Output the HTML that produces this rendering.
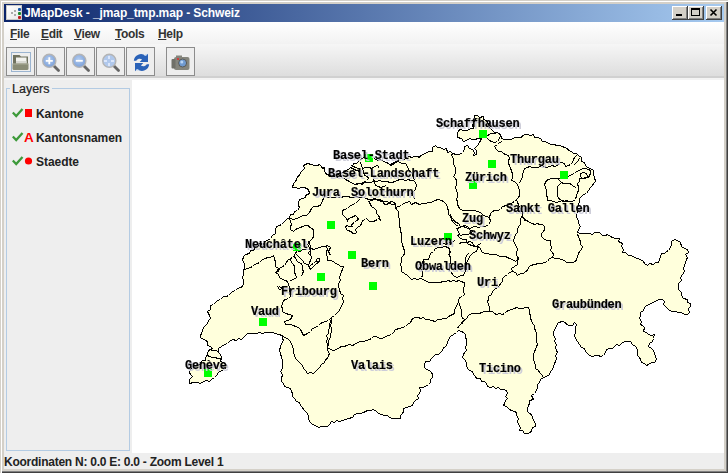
<!DOCTYPE html>
<html><head><meta charset="utf-8">
<style>
*{margin:0;padding:0;box-sizing:border-box}
html,body{width:728px;height:473px;overflow:hidden;background:#d4d0c8;font-family:"Liberation Sans",sans-serif}
.abs{position:absolute}
#frame{position:absolute;left:0;top:0;width:728px;height:473px;background:#d4d0c8;
 box-shadow: inset 1px 1px 0 #d4d0c8, inset 2px 2px 0 #fff, inset -1px -1px 0 #404040, inset -2px -2px 0 #808080}
#title{left:4px;top:4px;width:720px;height:18px;background:linear-gradient(to right,#0a246a 0%,#a6caf0 100%)}
#title .t{position:absolute;left:20px;top:2px;color:#fff;font-weight:bold;font-size:12px;white-space:nowrap;letter-spacing:-0.1px}
.wbtn{position:absolute;top:2px;width:16px;height:14px;background:#d4d0c8;
 box-shadow: inset -1px -1px 0 #404040, inset 1px 1px 0 #fff, inset -2px -2px 0 #808080}
#menubar{left:4px;top:22px;width:720px;height:22px;background:linear-gradient(#ffffff,#f2f2f2)}
.menu{position:absolute;top:5px;font-size:12px;line-height:14px;font-weight:bold;color:#333;white-space:nowrap;letter-spacing:-0.35px}
.menu u{text-decoration:underline;text-underline-offset:1px;text-decoration-thickness:1px}
#toolbar{left:4px;top:44px;width:720px;height:36px;background:linear-gradient(#f6f6f6,#dcdcdc);border-bottom:2px solid #f4f4f4;box-shadow:inset 0 -3px 0 -1px #d0d0d0}
.tb{position:absolute;top:3px;width:29px;height:29px;border:1px solid #8c8c8c;background:#eeeeee}
#left{left:4px;top:80px;width:128px;height:373px;background:#eeeeee}
#map{left:132px;top:80px;width:592px;height:373px;background:#fff;overflow:hidden}
#status{left:4px;top:453px;width:720px;height:16px;background:#eeeeee}
.lb{position:absolute;font-family:"Liberation Mono",monospace;font-weight:bold;font-size:12px;line-height:12px;letter-spacing:-0.25px;color:#000;white-space:nowrap;text-shadow:2px 2px 0 #cdcdd9;will-change:transform;-webkit-text-stroke:0.15px #000}
.li{position:absolute;left:32px;font-size:12px;font-weight:bold;color:#222;white-space:nowrap;line-height:14px;letter-spacing:-0.05px}
</style></head><body>
<div id="frame"></div>
<svg width="0" height="0" style="position:absolute"><defs><radialGradient id="mg" cx="0.45" cy="0.4" r="0.6"><stop offset="0" stop-color="#b4cdf0"/><stop offset="1" stop-color="#7a9fd8"/></radialGradient></defs></svg>
<div id="title" class="abs">
 <div class="abs" style="left:2px;top:1px;width:16px;height:15px;background:linear-gradient(135deg,#fff,#e8e8e8);border:1px solid #c8c8c8">
  <div class="abs" style="left:11px;top:2px;width:3px;height:3px;border-radius:1px;background:#1a5aa8"></div>
  <div class="abs" style="left:11px;top:6px;width:3px;height:3px;border-radius:1px;background:#1a8a28"></div>
  <div class="abs" style="left:11px;top:10px;width:3px;height:3px;border-radius:1px;background:#c02020"></div>
  <div class="abs" style="left:7px;top:4px;width:2px;height:2px;background:#aaa"></div>
  <div class="abs" style="left:4px;top:6px;width:2px;height:2px;background:#aaa"></div>
  <div class="abs" style="left:7px;top:8px;width:2px;height:2px;background:#aaa"></div>
 </div>
 <div class="t">JMapDesk - _jmap_tmp.map - Schweiz</div>
 <div class="wbtn" style="left:668px"><div class="abs" style="left:4px;top:8px;width:6px;height:2px;background:#000"></div></div>
 <div class="wbtn" style="left:684px"><div class="abs" style="left:3px;top:2px;width:9px;height:8px;border:1px solid #000;border-top-width:2px"></div></div>
 <div class="wbtn" style="left:702px"><svg class="abs" style="left:0;top:0" width="16" height="14"><path d="M4.5 3.5 L10.5 9.5 M10.5 3.5 L4.5 9.5" stroke="#000" stroke-width="1.6"/></svg></div>
</div>
<div id="menubar" class="abs">
 <div class="menu" style="left:6px"><u>F</u>ile</div>
 <div class="menu" style="left:37px"><u>E</u>dit</div>
 <div class="menu" style="left:70px"><u>V</u>iew</div>
 <div class="menu" style="left:111px"><u>T</u>ools</div>
 <div class="menu" style="left:154px"><u>H</u>elp</div>
</div>
<div id="toolbar" class="abs">
 <div class="tb" style="left:2px">
  <div class="abs" style="left:4px;top:4px;width:20px;height:20px;border:1px solid #9bb4d0"></div>
  <svg class="abs" style="left:0;top:0" width="29" height="29">
   <path d="M6 7 h6.5 l1.5 1.5 h7 v9 h-15z" fill="#70725f"/>
   <rect x="9" y="9.5" width="10.5" height="6.5" fill="#f2f2ee"/>
   <rect x="9" y="13" width="10.5" height="3" fill="#d8d8d2"/>
   <path d="M5.5 15.5 h16 v5 q0 1.5 -1.5 1.5 h-13 q-1.5 0 -1.5 -1.5z" fill="#8a8c76"/>
   <path d="M6 16 h15" stroke="#a8aa96" stroke-width="1"/>
  </svg>
 </div>
 <div class="tb" style="left:32px">
  <svg class="abs" style="left:0;top:0" width="29" height="29">
   <path d="M17 18 l4.5 4.5" stroke="#666" stroke-width="2.8" stroke-linecap="round"/>
   <circle cx="12.3" cy="12.8" r="6.6" fill="url(#mg)" stroke="#b4b4b4" stroke-width="1.4"/>
   <path d="M12.3 9.3 v7 M8.8 12.8 h7" stroke="#fff" stroke-width="1.8"/>
  </svg>
 </div>
 <div class="tb" style="left:62px">
  <svg class="abs" style="left:0;top:0" width="29" height="29">
   <path d="M17 18 l4.5 4.5" stroke="#666" stroke-width="2.8" stroke-linecap="round"/>
   <circle cx="12.3" cy="12.8" r="6.6" fill="url(#mg)" stroke="#b4b4b4" stroke-width="1.4"/>
   <path d="M8.8 12.8 h7" stroke="#fff" stroke-width="1.8"/>
  </svg>
 </div>
 <div class="tb" style="left:92px">
  <svg class="abs" style="left:0;top:0" width="29" height="29">
   <path d="M17 18 l4.5 4.5" stroke="#666" stroke-width="2.8" stroke-linecap="round"/>
   <circle cx="12.3" cy="12.8" r="6.6" fill="#b0c8ec" stroke="#b4b4b4" stroke-width="1.4"/>
   <path d="M12 8 v3 M12 15 v3 M7 13 h3 M14 13 h3" stroke="#e8f0ff" stroke-width="1.5"/>
  </svg>
 </div>
 <div class="tb" style="left:122px">
  <svg class="abs" style="left:0;top:0" width="29" height="29">
   <g transform="translate(14.5 14.5) scale(1.18) translate(-14.5 -14.5)">
   <path d="M8 13 a6 6 0 0 1 10 -4 l2 -2 v7 h-7 l2 -2 a3.5 3.5 0 0 0 -5 1z" fill="#2a62b8"/>
   <path d="M21 16 a6 6 0 0 1 -10 4 l-2 2 v-7 h7 l-2 2 a3.5 3.5 0 0 0 5 -1z" fill="#2a62b8"/>
   <path d="M17 8.5 l2 -0.5 M10 20.5 l2 0.5" stroke="#9cc0f0" stroke-width="0.8"/>
   </g>
  </svg>
 </div>
 <div class="tb" style="left:162px">
  <svg class="abs" style="left:0;top:0" width="29" height="29">
   <rect x="7" y="9" width="15.5" height="13" rx="2" fill="#85857c"/>
   <rect x="4.5" y="11" width="4" height="9.5" rx="1" fill="#707068"/>
   <rect x="9" y="7.5" width="6" height="2.5" fill="#85857c"/>
   <circle cx="15.6" cy="15" r="4" fill="#6f9ad0" stroke="#5a5a55" stroke-width="1"/>
   <circle cx="14.8" cy="14" r="1.5" fill="#b8d4f4"/>
   <circle cx="11" cy="11" r="1.1" fill="#e03030"/>
  </svg>
 </div>
</div>
<div id="left" class="abs">
 <div class="abs" style="left:2px;top:8px;width:124px;height:363px;border:1px solid #b3cbe3"></div>
 <div class="abs" style="left:6px;top:2px;padding:0 2px;background:#eeeeee;font-size:12.5px;line-height:14px;color:#222;-webkit-text-stroke:0.2px #222">Layers</div>
 <svg class="abs" style="left:8px;top:26px" width="24" height="62">
  <path d="M0.8 6.5 L4.2 10 L10.5 3" stroke="#3d9a3a" stroke-width="2.3" fill="none"/>
  <rect x="13" y="3" width="7" height="8" fill="#ff0000"/>
  <path d="M0.8 30.5 L4.2 34 L10.5 27" stroke="#3d9a3a" stroke-width="2.3" fill="none"/>
  <path d="M0.8 54.5 L4.2 58 L10.5 51" stroke="#3d9a3a" stroke-width="2.3" fill="none"/>
  <circle cx="16.5" cy="55" r="3.6" fill="#ff0000"/>
 </svg>
 <div class="abs" style="left:20px;top:50px;font-size:13.5px;line-height:16px;color:#ff0000;font-weight:bold;font-family:'Liberation Sans',sans-serif">A</div>
 <div class="li" style="top:27px">Kantone</div>
 <div class="li" style="top:51px">Kantonsnamen</div>
 <div class="li" style="top:75px">Staedte</div>
</div>
<div id="map" class="abs"></div>
<div id="status" class="abs">
 <div class="abs" style="left:0px;top:2px;font-size:12px;font-weight:bold;color:#222;line-height:14px;white-space:nowrap;letter-spacing:-0.25px">Koordinaten N: 0.0 E: 0.0 - Zoom Level 1</div>
</div>
<svg class="abs" style="left:0;top:0" width="728" height="473" viewBox="0 0 728 473" shape-rendering="crispEdges">
<polygon points="303.5,165.5 304.5,168.5 302.5,170.5 300.5,172.5 299.5,175.5 297.5,176.5 296.5,179.5 295.5,181.5 293.5,183.5 292.5,187.5 295.5,187.5 298.5,188.5 301.5,187.5 304.5,187.5 308.5,189.5 309.5,193.5 305.5,195.5 305.5,197.5 302.5,198.5 299.5,199.5 298.5,202.5 298.5,205.5 299.5,207.5 297.5,210.5 294.5,211.5 293.5,214.5 290.5,214.5 289.5,217.5 286.5,219.5 283.5,222.5 281.5,224.5 279.5,225.5 276.5,226.5 275.5,229.5 275.5,233.5 272.5,235.5 270.5,238.5 267.5,240.5 264.5,241.5 263.5,244.5 259.5,243.5 258.5,246.5 255.5,246.5 253.5,250.5 250.5,250.5 249.5,253.5 245.5,254.5 243.5,256.5 242.5,260.5 244.5,263.5 244.5,267.5 243.5,270.5 243.5,274.5 242.5,277.5 243.5,280.5 243.5,283.5 242.5,286.5 240.5,287.5 237.5,288.5 235.5,290.5 232.5,291.5 230.5,293.5 228.5,295.5 226.5,296.5 223.5,296.5 220.5,299.5 217.5,300.5 215.5,302.5 213.5,304.5 210.5,305.5 210.5,309.5 207.5,311.5 209.5,315.5 210.5,318.5 208.5,320.5 207.5,323.5 205.5,325.5 203.5,327.5 202.5,330.5 201.5,333.5 200.5,335.5 200.5,337.5 203.5,339.5 206.5,340.5 207.5,342.5 207.5,345.5 210.5,346.5 212.5,348.5 208.5,350.5 207.5,354.5 205.5,357.5 205.5,360.5 202.5,360.5 199.5,364.5 196.5,364.5 194.5,366.5 192.5,367.5 190.5,369.5 189.5,372.5 190.5,374.5 192.5,376.5 189.5,379.5 189.5,383.5 193.5,382.5 197.5,382.5 200.5,383.5 203.5,381.5 206.5,380.5 209.5,381.5 211.5,379.5 214.5,377.5 216.5,375.5 218.5,372.5 221.5,370.5 224.5,369.5 227.5,366.5 225.5,364.5 223.5,362.5 220.5,361.5 221.5,357.5 220.5,354.5 218.5,352.5 218.5,348.5 221.5,346.5 224.5,344.5 227.5,343.5 229.5,341.5 232.5,339.5 236.5,340.5 238.5,338.5 241.5,339.5 243.5,337.5 245.5,335.5 247.5,333.5 250.5,333.5 253.5,333.5 256.5,333.5 259.5,332.5 262.5,333.5 265.5,332.5 268.5,332.5 272.5,332.5 275.5,333.5 278.5,334.5 282.5,335.5 282.5,338.5 283.5,340.5 281.5,343.5 280.5,346.5 279.5,350.5 280.5,353.5 281.5,357.5 282.5,360.5 282.5,364.5 282.5,368.5 280.5,371.5 282.5,374.5 281.5,378.5 281.5,381.5 283.5,383.5 284.5,386.5 287.5,387.5 290.5,388.5 291.5,391.5 292.5,393.5 292.5,396.5 294.5,398.5 296.5,401.5 299.5,402.5 300.5,405.5 302.5,407.5 303.5,409.5 305.5,411.5 307.5,413.5 308.5,416.5 308.5,419.5 310.5,422.5 312.5,424.5 315.5,425.5 318.5,427.5 321.5,426.5 324.5,426.5 327.5,426.5 329.5,424.5 331.5,421.5 334.5,422.5 336.5,420.5 339.5,421.5 342.5,420.5 345.5,419.5 348.5,418.5 352.5,417.5 354.5,414.5 357.5,413.5 360.5,413.5 363.5,412.5 367.5,410.5 370.5,410.5 373.5,409.5 376.5,411.5 378.5,413.5 381.5,414.5 384.5,415.5 387.5,415.5 389.5,417.5 392.5,418.5 395.5,418.5 397.5,418.5 400.5,418.5 400.5,415.5 402.5,413.5 403.5,411.5 403.5,408.5 406.5,407.5 409.5,406.5 412.5,405.5 413.5,402.5 415.5,400.5 418.5,398.5 417.5,395.5 419.5,393.5 420.5,390.5 419.5,387.5 422.5,387.5 425.5,386.5 428.5,384.5 430.5,382.5 430.5,379.5 432.5,377.5 432.5,374.5 431.5,372.5 429.5,370.5 426.5,369.5 424.5,367.5 424.5,364.5 425.5,361.5 429.5,361.5 431.5,358.5 433.5,356.5 435.5,354.5 438.5,354.5 440.5,352.5 442.5,350.5 443.5,347.5 446.5,346.5 447.5,342.5 448.5,339.5 450.5,336.5 453.5,334.5 456.5,332.5 458.5,330.5 461.5,331.5 463.5,332.5 465.5,334.5 465.5,337.5 466.5,339.5 466.5,341.5 466.5,344.5 465.5,347.5 466.5,350.5 464.5,352.5 463.5,354.5 462.5,357.5 464.5,359.5 466.5,362.5 466.5,365.5 467.5,368.5 469.5,370.5 472.5,371.5 473.5,374.5 475.5,376.5 476.5,378.5 480.5,378.5 481.5,381.5 484.5,381.5 486.5,383.5 487.5,386.5 490.5,387.5 493.5,386.5 495.5,388.5 498.5,387.5 500.5,389.5 503.5,389.5 506.5,390.5 507.5,393.5 505.5,396.5 507.5,398.5 505.5,400.5 504.5,403.5 503.5,405.5 506.5,406.5 509.5,409.5 511.5,410.5 514.5,411.5 516.5,412.5 516.5,415.5 518.5,418.5 517.5,421.5 518.5,424.5 520.5,427.5 519.5,430.5 522.5,430.5 524.5,433.5 527.5,433.5 530.5,432.5 531.5,430.5 532.5,427.5 535.5,426.5 535.5,423.5 533.5,420.5 532.5,417.5 531.5,414.5 529.5,413.5 527.5,411.5 527.5,408.5 528.5,405.5 529.5,403.5 529.5,400.5 533.5,399.5 531.5,395.5 534.5,393.5 536.5,390.5 537.5,387.5 537.5,384.5 539.5,382.5 540.5,379.5 543.5,377.5 546.5,376.5 549.5,374.5 550.5,371.5 552.5,369.5 553.5,366.5 554.5,363.5 555.5,361.5 556.5,358.5 555.5,355.5 557.5,352.5 556.5,350.5 555.5,347.5 556.5,344.5 554.5,341.5 555.5,338.5 553.5,335.5 553.5,331.5 555.5,328.5 556.5,325.5 558.5,322.5 562.5,321.5 565.5,322.5 566.5,324.5 569.5,325.5 572.5,325.5 574.5,322.5 576.5,324.5 575.5,327.5 575.5,329.5 575.5,332.5 574.5,335.5 575.5,338.5 577.5,341.5 579.5,344.5 581.5,347.5 584.5,348.5 585.5,351.5 587.5,353.5 589.5,355.5 592.5,356.5 595.5,355.5 598.5,355.5 600.5,356.5 603.5,355.5 605.5,352.5 606.5,349.5 609.5,348.5 612.5,348.5 614.5,346.5 616.5,344.5 619.5,345.5 621.5,343.5 624.5,341.5 627.5,341.5 630.5,341.5 632.5,344.5 635.5,346.5 637.5,349.5 637.5,352.5 637.5,355.5 639.5,357.5 640.5,359.5 641.5,362.5 644.5,363.5 646.5,365.5 648.5,364.5 651.5,362.5 654.5,362.5 656.5,359.5 655.5,356.5 654.5,353.5 653.5,350.5 651.5,348.5 648.5,346.5 649.5,343.5 652.5,341.5 653.5,338.5 654.5,334.5 651.5,335.5 648.5,334.5 646.5,332.5 643.5,331.5 644.5,327.5 642.5,325.5 640.5,324.5 641.5,321.5 639.5,318.5 640.5,315.5 640.5,312.5 643.5,310.5 644.5,307.5 646.5,305.5 649.5,304.5 652.5,302.5 655.5,301.5 658.5,299.5 662.5,299.5 664.5,301.5 663.5,304.5 665.5,306.5 667.5,308.5 669.5,310.5 672.5,311.5 675.5,311.5 678.5,312.5 681.5,312.5 684.5,314.5 687.5,314.5 689.5,312.5 688.5,308.5 690.5,306.5 690.5,303.5 687.5,302.5 687.5,299.5 683.5,298.5 681.5,295.5 681.5,292.5 678.5,289.5 678.5,286.5 678.5,283.5 681.5,280.5 680.5,277.5 682.5,274.5 684.5,271.5 683.5,268.5 684.5,265.5 685.5,262.5 686.5,259.5 687.5,257.5 685.5,254.5 688.5,252.5 687.5,249.5 684.5,248.5 681.5,246.5 680.5,242.5 677.5,240.5 674.5,239.5 671.5,241.5 671.5,244.5 670.5,247.5 668.5,250.5 666.5,251.5 664.5,253.5 661.5,253.5 660.5,256.5 659.5,259.5 658.5,262.5 655.5,262.5 653.5,264.5 649.5,263.5 647.5,265.5 644.5,263.5 643.5,261.5 640.5,259.5 637.5,258.5 634.5,257.5 631.5,255.5 628.5,255.5 625.5,252.5 622.5,252.5 623.5,249.5 621.5,246.5 622.5,243.5 618.5,241.5 619.5,238.5 615.5,238.5 612.5,237.5 610.5,236.5 607.5,234.5 605.5,235.5 602.5,235.5 599.5,232.5 596.5,232.5 594.5,232.5 592.5,234.5 589.5,233.5 586.5,233.5 583.5,233.5 580.5,233.5 577.5,232.5 578.5,229.5 580.5,226.5 578.5,223.5 578.5,220.5 576.5,217.5 576.5,213.5 578.5,210.5 577.5,207.5 578.5,204.5 579.5,201.5 579.5,198.5 581.5,196.5 583.5,194.5 586.5,193.5 588.5,190.5 590.5,187.5 592.5,185.5 593.5,183.5 595.5,181.5 594.5,177.5 593.5,174.5 593.5,170.5 590.5,168.5 587.5,167.5 585.5,165.5 584.5,162.5 581.5,161.5 581.5,157.5 578.5,155.5 576.5,153.5 573.5,153.5 571.5,151.5 568.5,150.5 567.5,148.5 564.5,147.5 562.5,146.5 559.5,145.5 556.5,145.5 554.5,144.5 551.5,144.5 548.5,143.5 545.5,141.5 542.5,141.5 540.5,138.5 537.5,137.5 534.5,137.5 533.5,134.5 530.5,135.5 527.5,134.5 525.5,134.5 522.5,135.5 521.5,137.5 518.5,137.5 514.5,137.5 511.5,139.5 507.5,139.5 504.5,139.5 501.5,138.5 500.5,134.5 497.5,132.5 494.5,132.5 492.5,130.5 490.5,128.5 488.5,127.5 488.5,123.5 486.5,120.5 483.5,119.5 483.5,116.5 479.5,117.5 477.5,115.5 474.5,115.5 475.5,119.5 473.5,122.5 472.5,125.5 473.5,128.5 470.5,128.5 467.5,130.5 463.5,130.5 460.5,129.5 458.5,130.5 457.5,133.5 457.5,137.5 461.5,138.5 463.5,141.5 466.5,140.5 469.5,138.5 472.5,139.5 475.5,139.5 477.5,138.5 481.5,138.5 479.5,142.5 477.5,145.5 474.5,148.5 476.5,150.5 476.5,154.5 473.5,155.5 474.5,152.5 472.5,149.5 469.5,148.5 467.5,145.5 464.5,146.5 464.5,149.5 462.5,152.5 459.5,154.5 456.5,154.5 452.5,153.5 450.5,151.5 447.5,152.5 446.5,148.5 443.5,149.5 440.5,147.5 437.5,147.5 435.5,145.5 432.5,147.5 432.5,151.5 429.5,151.5 426.5,152.5 423.5,154.5 420.5,155.5 419.5,157.5 417.5,156.5 414.5,156.5 411.5,157.5 409.5,156.5 406.5,157.5 404.5,159.5 401.5,158.5 398.5,159.5 397.5,161.5 394.5,163.5 390.5,165.5 388.5,163.5 386.5,162.5 383.5,161.5 380.5,159.5 377.5,160.5 374.5,158.5 371.5,156.5 368.5,156.5 365.5,156.5 362.5,158.5 360.5,159.5 358.5,161.5 356.5,163.5 353.5,163.5 352.5,166.5 349.5,168.5 346.5,170.5 343.5,172.5 340.5,173.5 337.5,174.5 335.5,175.5 332.5,176.5 329.5,175.5 325.5,173.5 324.5,170.5 324.5,167.5 322.5,168.5 321.5,166.5 319.5,164.5 317.5,165.5 314.5,165.5 311.5,164.5 307.5,163.5 303.5,165.5" fill="#ffffdc" stroke="#000" stroke-width="1"/>
<g fill="none" stroke="#000" stroke-width="1">
<polyline points="457.5,228.5 459.5,227.5 462.5,226.5 464.5,225.5 467.5,226.5 469.5,229.5 472.5,231.5 470.5,233.5 467.5,234.5 463.5,234.5 460.5,235.5"/>
<polyline points="459.5,243.5 461.5,242.5 464.5,242.5 467.5,242.5 469.5,241.5 472.5,242.5 473.5,245.5 476.5,246.5 478.5,244.5 481.5,243.5"/>
<polyline points="210.5,350.5 213.5,350.5 215.5,350.5 218.5,351.5"/>
<polyline points="207.5,355.5 209.5,356.5 212.5,357.5 215.5,357.5 217.5,358.5 220.5,358.5"/>
<polyline points="287.5,218.5 290.5,218.5 293.5,219.5 296.5,218.5 299.5,217.5 302.5,215.5 306.5,215.5 309.5,212.5 311.5,208.5 313.5,206.5 317.5,206.5 321.5,204.5 322.5,200.5 324.5,196.5 327.5,197.5 330.5,197.5 333.5,197.5 335.5,197.5 338.5,197.5 341.5,197.5 343.5,196.5 346.5,196.5 348.5,196.5 350.5,197.5 353.5,197.5 356.5,196.5 358.5,197.5 361.5,197.5 363.5,197.5 366.5,198.5 368.5,199.5 371.5,199.5 374.5,198.5 376.5,199.5 378.5,200.5 381.5,201.5 383.5,201.5 386.5,201.5 389.5,202.5 391.5,201.5 394.5,202.5 395.5,204.5 395.5,207.5 398.5,206.5 401.5,205.5 403.5,203.5 406.5,202.5 409.5,201.5 411.5,204.5 415.5,202.5 419.5,204.5 422.5,203.5 425.5,203.5 428.5,202.5 431.5,202.5 434.5,200.5 438.5,199.5 441.5,200.5 443.5,201.5 446.5,204.5 447.5,207.5 448.5,211.5 448.5,214.5 450.5,216.5 451.5,219.5 452.5,221.5 455.5,224.5 458.5,226.5"/>
<polyline points="329.5,175.5 332.5,175.5 334.5,176.5 337.5,177.5 340.5,176.5 342.5,177.5 345.5,179.5 349.5,181.5 352.5,183.5 355.5,184.5 359.5,183.5 362.5,184.5 364.5,182.5 367.5,182.5 370.5,182.5 373.5,181.5 376.5,181.5 379.5,180.5 382.5,181.5 384.5,181.5 387.5,181.5 389.5,182.5 392.5,182.5 394.5,181.5 397.5,180.5 399.5,179.5 402.5,179.5 405.5,180.5 408.5,179.5 410.5,180.5 413.5,180.5 415.5,182.5 416.5,185.5 415.5,189.5 413.5,191.5 411.5,193.5 413.5,196.5 414.5,199.5"/>
<polyline points="360.5,162.5 361.5,165.5 362.5,168.5 363.5,171.5 364.5,175.5 367.5,176.5 368.5,178.5 366.5,180.5 363.5,182.5 361.5,183.5 358.5,183.5 354.5,184.5 351.5,182.5 348.5,181.5 345.5,179.5"/>
<polyline points="362.5,168.5 365.5,167.5 369.5,167.5 371.5,168.5 374.5,166.5 377.5,165.5 379.5,168.5"/>
<polyline points="351.5,165.5 355.5,167.5 352.5,168.5 356.5,170.5 360.5,171.5"/>
<polyline points="373.5,178.5 374.5,182.5 375.5,185.5 378.5,186.5 380.5,187.5 383.5,186.5 386.5,185.5"/>
<polyline points="390.5,165.5 391.5,163.5 394.5,162.5 397.5,160.5 399.5,162.5 402.5,163.5 405.5,163.5 407.5,166.5 408.5,169.5 410.5,171.5 412.5,173.5 413.5,177.5 414.5,180.5"/>
<polyline points="452.5,153.5 451.5,155.5 453.5,158.5 453.5,161.5 453.5,164.5 455.5,167.5 455.5,170.5 455.5,173.5 453.5,176.5 455.5,178.5 456.5,180.5 456.5,184.5 455.5,187.5 456.5,190.5 457.5,193.5 457.5,196.5 456.5,199.5 457.5,201.5 457.5,204.5 459.5,208.5 462.5,210.5 465.5,210.5 468.5,210.5 471.5,210.5 474.5,210.5 477.5,211.5 480.5,212.5 483.5,215.5 486.5,216.5 489.5,217.5 490.5,221.5 488.5,224.5 485.5,226.5 481.5,226.5 478.5,227.5 475.5,226.5 473.5,226.5 470.5,228.5 468.5,228.5 465.5,227.5 463.5,226.5 460.5,226.5 458.5,223.5 454.5,221.5 453.5,219.5 451.5,217.5 450.5,214.5"/>
<polyline points="395.5,207.5 396.5,209.5 398.5,211.5 398.5,214.5 398.5,216.5 399.5,219.5 399.5,221.5 399.5,223.5 399.5,226.5 400.5,228.5 400.5,231.5 401.5,233.5 401.5,236.5 401.5,238.5 401.5,241.5 402.5,244.5 403.5,248.5 404.5,250.5 404.5,253.5 403.5,255.5 401.5,257.5 401.5,261.5 400.5,264.5 401.5,267.5 401.5,271.5 404.5,273.5 407.5,275.5 409.5,277.5 411.5,279.5 414.5,278.5 417.5,279.5 420.5,278.5 423.5,279.5 426.5,281.5 429.5,282.5 432.5,282.5 434.5,282.5 437.5,282.5 440.5,282.5 442.5,281.5 445.5,281.5 448.5,280.5 450.5,281.5 453.5,280.5 456.5,281.5 458.5,280.5 461.5,281.5 465.5,283.5"/>
<polyline points="421.5,277.5 422.5,275.5 422.5,272.5 421.5,269.5 419.5,267.5 421.5,265.5 422.5,262.5 423.5,259.5 426.5,259.5 428.5,259.5 429.5,256.5 430.5,253.5 433.5,251.5 435.5,248.5 438.5,247.5 441.5,247.5 444.5,246.5 448.5,247.5 449.5,250.5 450.5,252.5 447.5,255.5"/>
<polyline points="448.5,247.5 449.5,249.5 449.5,252.5 449.5,255.5 450.5,257.5 450.5,260.5 450.5,262.5 449.5,264.5 449.5,267.5 449.5,270.5 451.5,272.5 452.5,274.5 454.5,276.5 457.5,277.5 460.5,275.5 463.5,275.5 464.5,272.5 466.5,269.5 465.5,266.5 466.5,264.5 465.5,261.5 465.5,258.5 466.5,255.5 468.5,253.5"/>
<polyline points="443.5,243.5 446.5,244.5 448.5,242.5 451.5,243.5 452.5,241.5 455.5,240.5"/>
<polyline points="502.5,141.5 499.5,142.5 497.5,144.5 494.5,146.5 496.5,149.5 498.5,151.5 501.5,151.5 503.5,153.5 505.5,154.5 508.5,155.5 509.5,158.5 508.5,160.5 508.5,163.5 509.5,165.5 510.5,168.5 511.5,170.5 512.5,174.5 512.5,177.5 511.5,180.5 514.5,181.5 517.5,184.5 518.5,187.5 519.5,190.5 519.5,193.5 519.5,195.5 518.5,197.5 516.5,199.5 514.5,201.5 512.5,202.5 509.5,204.5 506.5,205.5 502.5,206.5 500.5,209.5 497.5,210.5 494.5,210.5 492.5,211.5 490.5,213.5 489.5,217.5"/>
<polyline points="487.5,138.5 489.5,140.5 491.5,141.5 494.5,142.5 497.5,141.5 499.5,138.5 500.5,135.5 497.5,132.5 494.5,133.5 491.5,133.5 488.5,134.5 487.5,136.5"/>
<polyline points="570.5,164.5 568.5,165.5 565.5,166.5 564.5,163.5 561.5,162.5 558.5,163.5 557.5,165.5 554.5,166.5 552.5,165.5 549.5,166.5 546.5,167.5 544.5,166.5 541.5,165.5 538.5,167.5 535.5,167.5 532.5,167.5 529.5,166.5 527.5,167.5 524.5,168.5 523.5,171.5 522.5,174.5 522.5,177.5 520.5,180.5 519.5,183.5"/>
<polyline points="570.5,164.5 572.5,162.5 573.5,159.5 574.5,157.5 576.5,155.5"/>
<polyline points="573.5,165.5 575.5,163.5 577.5,161.5 579.5,158.5"/>
<polyline points="546.5,180.5 548.5,179.5 551.5,178.5 554.5,178.5 557.5,178.5 560.5,178.5 563.5,177.5 565.5,176.5 568.5,176.5 571.5,174.5 574.5,173.5 576.5,171.5 579.5,170.5 582.5,168.5 585.5,168.5 588.5,169.5 590.5,170.5 590.5,173.5 588.5,177.5 585.5,177.5 582.5,178.5 579.5,178.5 579.5,181.5 577.5,183.5 578.5,187.5 578.5,190.5 577.5,192.5 576.5,195.5 575.5,199.5 572.5,201.5 569.5,201.5 566.5,200.5 564.5,201.5 562.5,200.5 559.5,201.5 556.5,202.5 553.5,201.5 550.5,200.5 547.5,200.5 547.5,197.5 546.5,195.5 546.5,192.5 546.5,190.5 545.5,187.5 544.5,184.5 546.5,180.5"/>
<polyline points="561.5,182.5 563.5,183.5 566.5,183.5 569.5,183.5 571.5,184.5 573.5,186.5 576.5,187.5"/>
<polyline points="569.5,201.5 566.5,201.5 562.5,201.5 560.5,199.5 558.5,198.5 557.5,195.5 557.5,192.5 557.5,189.5 557.5,186.5 559.5,184.5 561.5,182.5 558.5,179.5"/>
<polyline points="580.5,173.5 583.5,172.5 586.5,173.5 587.5,176.5 585.5,178.5 582.5,178.5 580.5,176.5 580.5,173.5"/>
<polyline points="521.5,216.5 523.5,217.5 524.5,220.5 527.5,220.5 529.5,222.5 532.5,223.5 534.5,224.5 537.5,223.5 539.5,224.5 542.5,224.5 544.5,226.5 544.5,229.5 543.5,231.5 541.5,233.5 541.5,236.5 544.5,239.5 547.5,240.5 550.5,240.5 550.5,244.5 551.5,247.5 550.5,250.5 552.5,252.5 553.5,254.5 552.5,257.5 549.5,258.5 547.5,261.5 544.5,262.5 541.5,263.5 538.5,263.5 534.5,264.5 530.5,265.5 528.5,267.5 527.5,270.5 525.5,271.5 523.5,273.5 520.5,273.5 517.5,275.5 515.5,272.5 512.5,271.5 511.5,268.5 514.5,266.5 517.5,264.5 517.5,261.5 518.5,258.5 516.5,255.5 516.5,252.5 517.5,249.5 516.5,246.5 514.5,243.5 513.5,240.5 514.5,237.5 515.5,234.5 517.5,232.5 517.5,229.5 518.5,226.5 520.5,224.5 520.5,221.5 520.5,219.5 521.5,216.5"/>
<polyline points="516.5,199.5 517.5,202.5 518.5,204.5 519.5,207.5 521.5,209.5 522.5,212.5 522.5,216.5"/>
<polyline points="522.5,216.5 525.5,219.5 527.5,221.5 530.5,222.5"/>
<polyline points="478.5,246.5 477.5,248.5 476.5,251.5 473.5,252.5 471.5,254.5 469.5,256.5 468.5,259.5 466.5,262.5 466.5,265.5 466.5,269.5"/>
<polyline points="456.5,228.5 458.5,231.5 459.5,234.5 457.5,235.5 460.5,238.5 463.5,239.5 466.5,239.5 466.5,242.5 468.5,244.5 472.5,245.5 474.5,246.5 477.5,246.5 480.5,248.5 481.5,251.5 484.5,253.5 487.5,253.5 490.5,254.5 493.5,254.5 496.5,254.5 499.5,256.5 502.5,256.5 505.5,256.5 509.5,258.5 512.5,259.5 515.5,261.5 517.5,259.5 518.5,257.5"/>
<polyline points="552.5,257.5 555.5,258.5 558.5,258.5 561.5,259.5 564.5,260.5 566.5,262.5 569.5,262.5 572.5,262.5 575.5,261.5 576.5,259.5 577.5,256.5 578.5,253.5 579.5,251.5 581.5,249.5 582.5,246.5 580.5,244.5 580.5,241.5 579.5,239.5 578.5,236.5 577.5,234.5"/>
<polyline points="512.5,271.5 509.5,272.5 507.5,274.5 504.5,276.5 502.5,278.5 502.5,281.5 500.5,283.5 499.5,285.5 497.5,287.5 494.5,289.5 492.5,291.5 491.5,294.5 488.5,296.5 488.5,299.5 487.5,301.5 488.5,304.5 489.5,307.5 489.5,311.5"/>
<polyline points="461.5,324.5 462.5,322.5 464.5,320.5 466.5,318.5 468.5,315.5 471.5,313.5 473.5,313.5 476.5,313.5 479.5,313.5 481.5,312.5 484.5,311.5 486.5,311.5 489.5,311.5 492.5,311.5 494.5,313.5 496.5,314.5 499.5,313.5 502.5,314.5 504.5,313.5 506.5,311.5 508.5,310.5 511.5,309.5 514.5,308.5 516.5,307.5 519.5,308.5 522.5,308.5 525.5,307.5 528.5,307.5 529.5,310.5 529.5,313.5 530.5,315.5 530.5,318.5 531.5,320.5 532.5,323.5 534.5,325.5 534.5,328.5 535.5,330.5 536.5,333.5 536.5,336.5 536.5,338.5 536.5,341.5 537.5,344.5 536.5,346.5 535.5,349.5 534.5,351.5 533.5,354.5 533.5,356.5 533.5,359.5 534.5,362.5 535.5,365.5 535.5,368.5 538.5,370.5 539.5,372.5 541.5,374.5 543.5,377.5"/>
<polyline points="464.5,282.5 464.5,285.5 463.5,288.5 463.5,291.5 464.5,294.5 462.5,296.5 459.5,297.5 458.5,301.5 457.5,304.5 455.5,307.5 454.5,310.5 454.5,313.5 450.5,315.5 448.5,316.5 446.5,318.5 443.5,318.5 440.5,319.5 437.5,319.5 435.5,321.5 431.5,320.5 428.5,319.5 425.5,319.5 423.5,317.5 420.5,318.5 418.5,317.5 415.5,317.5 412.5,318.5 410.5,322.5 407.5,324.5 405.5,326.5 402.5,327.5 399.5,328.5 395.5,329.5 393.5,332.5 391.5,334.5 388.5,335.5 385.5,336.5 382.5,338.5 379.5,338.5 376.5,336.5 373.5,336.5 371.5,338.5 369.5,339.5 366.5,340.5 363.5,341.5 360.5,341.5 357.5,342.5 354.5,344.5 352.5,345.5 349.5,344.5 346.5,345.5 344.5,346.5 341.5,346.5 339.5,347.5 336.5,349.5 333.5,350.5 330.5,349.5 327.5,347.5"/>
<polyline points="458.5,301.5 459.5,304.5 460.5,307.5 461.5,310.5 461.5,312.5 461.5,315.5 462.5,318.5 465.5,319.5 462.5,321.5 460.5,324.5 458.5,326.5 457.5,328.5"/>
<polyline points="282.5,335.5 284.5,337.5 287.5,338.5 289.5,340.5 291.5,343.5 292.5,346.5 293.5,349.5 293.5,352.5 294.5,355.5 295.5,358.5 297.5,360.5 299.5,362.5 302.5,365.5 303.5,368.5 305.5,370.5 307.5,373.5 310.5,372.5 313.5,373.5 315.5,371.5 317.5,369.5 319.5,367.5 321.5,364.5 324.5,362.5 325.5,359.5 327.5,358.5 328.5,355.5 329.5,353.5 327.5,350.5 327.5,347.5 327.5,344.5 326.5,341.5 327.5,338.5 326.5,335.5 328.5,333.5 328.5,330.5 329.5,327.5 329.5,324.5 330.5,321.5 331.5,318.5"/>
<polyline points="326.5,246.5 327.5,249.5 326.5,251.5 326.5,254.5 327.5,257.5 327.5,260.5 330.5,260.5 333.5,261.5 335.5,263.5 338.5,264.5 340.5,266.5 343.5,266.5 342.5,269.5 341.5,271.5 340.5,274.5 339.5,277.5 340.5,280.5 338.5,283.5 338.5,286.5 339.5,289.5 340.5,293.5 343.5,295.5 342.5,298.5 343.5,301.5 342.5,304.5 340.5,307.5 339.5,310.5 336.5,313.5 334.5,315.5 331.5,317.5 328.5,320.5 325.5,321.5 322.5,322.5 320.5,323.5 318.5,325.5 315.5,327.5 312.5,328.5 310.5,331.5 307.5,333.5 303.5,335.5 301.5,331.5 300.5,329.5 298.5,327.5 295.5,326.5 293.5,325.5 290.5,324.5 288.5,324.5 285.5,324.5 284.5,321.5 287.5,320.5 290.5,319.5 292.5,315.5 289.5,314.5 285.5,313.5 282.5,311.5 282.5,308.5 281.5,306.5 282.5,303.5 283.5,300.5 285.5,299.5 288.5,298.5 290.5,296.5 290.5,293.5 289.5,290.5 289.5,287.5 288.5,284.5 287.5,281.5 285.5,280.5 282.5,279.5 279.5,277.5 278.5,274.5 275.5,272.5"/>
<polyline points="331.5,317.5 331.5,320.5 331.5,322.5 330.5,325.5 331.5,328.5 331.5,331.5 330.5,334.5 330.5,337.5 328.5,340.5 328.5,344.5 327.5,347.5"/>
<polyline points="244.5,269.5 247.5,268.5 250.5,267.5 252.5,266.5 254.5,264.5 257.5,263.5 259.5,262.5 262.5,259.5 265.5,258.5 267.5,257.5 270.5,257.5 273.5,255.5 274.5,258.5 275.5,262.5 275.5,266.5 278.5,268.5 277.5,270.5 275.5,272.5"/>
<polyline points="275.5,272.5 278.5,271.5 279.5,268.5 282.5,266.5 284.5,265.5 286.5,262.5 287.5,260.5 290.5,258.5 292.5,257.5 294.5,255.5 295.5,252.5 297.5,251.5"/>
<polyline points="296.5,254.5 298.5,256.5 300.5,258.5 302.5,260.5 304.5,263.5 307.5,264.5 309.5,266.5"/>
<polyline points="290.5,259.5 291.5,262.5 293.5,264.5 294.5,266.5 294.5,269.5 294.5,272.5 295.5,274.5 296.5,277.5 293.5,279.5 290.5,280.5"/>
<polyline points="293.5,256.5 295.5,257.5 296.5,260.5 298.5,262.5 301.5,263.5 302.5,266.5 302.5,269.5 303.5,271.5 302.5,273.5 301.5,276.5"/>
<polyline points="309.5,266.5 311.5,264.5 313.5,263.5 316.5,260.5"/>
<polyline points="316.5,258.5 319.5,258.5 319.5,261.5 316.5,261.5 316.5,258.5"/>
<polyline points="297.5,251.5 300.5,251.5 302.5,249.5 305.5,249.5 309.5,249.5 310.5,246.5 309.5,243.5 308.5,241.5"/>
<polyline points="279.5,286.5 282.5,288.5 279.5,289.5 277.5,286.5"/>
<polyline points="289.5,218.5 290.5,221.5 291.5,224.5 290.5,226.5 290.5,229.5 293.5,231.5 295.5,229.5 297.5,228.5 300.5,227.5 302.5,226.5 305.5,225.5 308.5,225.5 309.5,227.5 312.5,228.5 313.5,230.5 313.5,233.5 313.5,236.5 312.5,238.5 309.5,241.5 307.5,244.5 309.5,247.5 313.5,249.5 316.5,248.5 319.5,247.5 322.5,246.5 325.5,246.5 327.5,245.5 330.5,247.5 328.5,251.5 330.5,255.5"/>
<polyline points="309.5,247.5 310.5,250.5 308.5,252.5 309.5,255.5"/>
<polyline points="310.5,250.5 310.5,254.5 311.5,257.5 310.5,260.5 309.5,262.5 308.5,265.5 310.5,269.5 312.5,267.5 314.5,265.5 316.5,263.5 318.5,262.5 319.5,259.5"/>
<polyline points="359.5,199.5 357.5,201.5 355.5,203.5 352.5,204.5 349.5,206.5 347.5,208.5 344.5,209.5 342.5,210.5 342.5,214.5 344.5,216.5 346.5,218.5 347.5,220.5 348.5,218.5 351.5,217.5 355.5,215.5 357.5,217.5 358.5,219.5 356.5,220.5 354.5,222.5 352.5,223.5 351.5,225.5 352.5,226.5 349.5,226.5 346.5,225.5 345.5,227.5 347.5,230.5 351.5,231.5 352.5,233.5 355.5,233.5 356.5,232.5 355.5,229.5 357.5,227.5 360.5,225.5 361.5,223.5 362.5,220.5 365.5,219.5 366.5,218.5 369.5,221.5 373.5,221.5 377.5,219.5 378.5,218.5 380.5,220.5 379.5,217.5 378.5,215.5 376.5,213.5 376.5,210.5 374.5,208.5 371.5,206.5 369.5,202.5 368.5,201.5 371.5,200.5 374.5,199.5 378.5,199.5 382.5,200.5 383.5,203.5 385.5,204.5 389.5,203.5 392.5,204.5 395.5,204.5"/>
</g>
</svg>
<svg class="abs" style="left:0;top:0" width="728" height="473" shape-rendering="crispEdges"><g fill="#00ff00">
<rect x="293" y="243" width="8" height="8"/>
<rect x="479" y="130" width="8" height="8"/>
<rect x="488" y="160" width="8" height="8"/>
<rect x="469" y="181" width="8" height="8"/>
<rect x="560" y="171" width="8" height="8"/>
<rect x="365" y="154" width="8" height="8"/>
<rect x="327" y="221" width="8" height="8"/>
<rect x="348" y="251" width="8" height="8"/>
<rect x="317" y="273" width="8" height="8"/>
<rect x="369" y="282" width="8" height="8"/>
<rect x="259" y="318" width="8" height="8"/>
<rect x="204" y="369" width="8" height="8"/>
<rect x="444" y="233" width="8" height="8"/>
</g></svg>
<div class="lb" style="left:436px;top:118px">Schaffhausen</div>
<div class="lb" style="left:333px;top:150px">Basel-Stadt</div>
<div class="lb" style="left:328px;top:168px">Basel-Landschaft</div>
<div class="lb" style="left:510px;top:154px">Thurgau</div>
<div class="lb" style="left:465px;top:172px">Zürich</div>
<div class="lb" style="left:312px;top:187px">Jura</div>
<div class="lb" style="left:351px;top:187px">Solothurn</div>
<div class="lb" style="left:506px;top:203px">Sankt Gallen</div>
<div class="lb" style="left:462px;top:213px">Zug</div>
<div class="lb" style="left:469px;top:230px">Schwyz</div>
<div class="lb" style="left:410px;top:236px">Luzern</div>
<div class="lb" style="left:245px;top:239px">Neuchâtel</div>
<div class="lb" style="left:361px;top:258px">Bern</div>
<div class="lb" style="left:415px;top:261px">Obwalden</div>
<div class="lb" style="left:477px;top:277px">Uri</div>
<div class="lb" style="left:281px;top:286px">Fribourg</div>
<div class="lb" style="left:552px;top:299px">Graubünden</div>
<div class="lb" style="left:251px;top:306px">Vaud</div>
<div class="lb" style="left:351px;top:360px">Valais</div>
<div class="lb" style="left:479px;top:363px">Ticino</div>
<div class="lb" style="left:185px;top:360px">Genève</div>
</body></html>
